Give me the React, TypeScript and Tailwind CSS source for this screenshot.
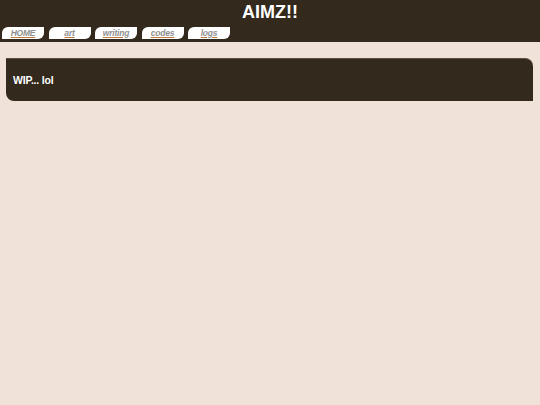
import React from "react";

const tabs = ["HOME", "art", "writing", "codes", "logs"];

export default function App() {
  return (
    <div className="min-h-[405px] w-full bg-[#f0e2d8]" style={{ fontFamily: '"Liberation Sans", Arial, sans-serif' }}>
      <div className="bg-[#33291d] h-[42px] flex flex-col">
        <div className="h-[26px] flex items-center justify-center">
          <h1 className="text-[18px] leading-none font-bold text-white mt-[-2px]">AIMZ!!</h1>
        </div>
        <div className="flex gap-[4.5px] pl-[2px] pt-[1px]">
          {tabs.map((t) => (
            <div
              key={t}
              className="w-[42px] h-[12px] bg-white rounded-tl-[6px] rounded-br-[6px] flex items-center justify-center"
            >
              <span className="text-[8.5px] leading-none font-bold italic text-[#8f8f8f] underline decoration-[#c07a40] underline-offset-[1px] tracking-[-0.2px]">
                {t}
              </span>
            </div>
          ))}
        </div>
      </div>
      <div className="px-[6px] pr-[7px] pt-[16px]">
        <div className="bg-[#33291d] h-[43px] rounded-bl-[8px] rounded-tr-[8px] border-t border-[#5b4f42] flex items-center px-[7px]">
          <span className="text-[10.5px] font-bold text-white mt-[1px] tracking-[-0.2px]">WIP... lol</span>
        </div>
      </div>
    </div>
  );
}
